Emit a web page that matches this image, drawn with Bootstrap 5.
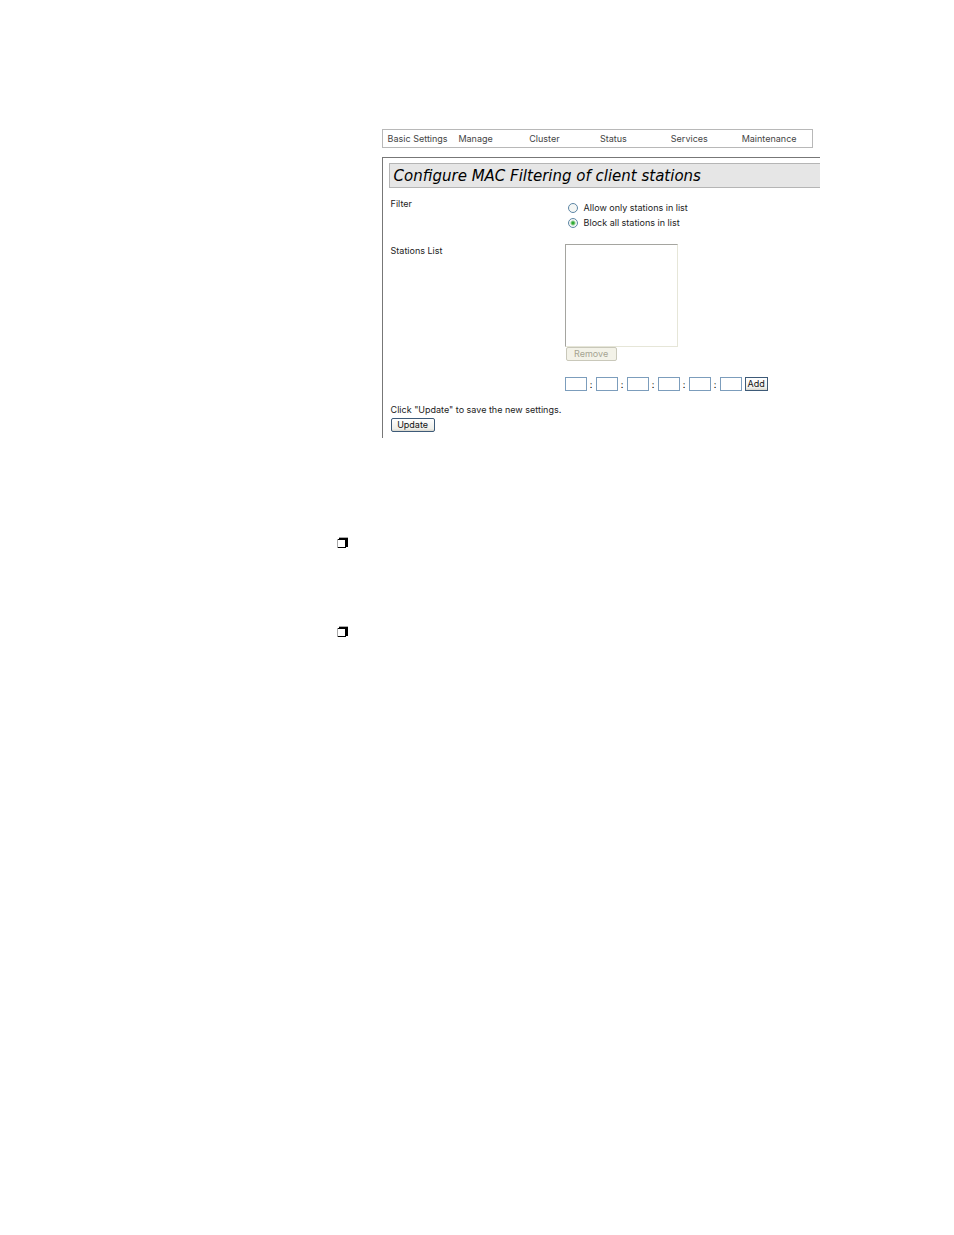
<!DOCTYPE html>
<html lang="en">
<head>
<meta charset="utf-8">
<meta name="viewport" content="width=device-width, initial-scale=1">
<title>Configure MAC Filtering of client stations</title>
<link rel="stylesheet" href="https://cdn.jsdelivr.net/npm/bootstrap@5.3.0/dist/css/bootstrap.min.css">
<style>
  body { background: #fff; color: #222; font-family: Inter, "DejaVu Sans", sans-serif; font-size: 9px; line-height: 15px; padding-top: 129px; }
  .doc-body { margin-left: 40%; width: 46%; }
  .menu-bar { border: 1px solid #b8b8b8; margin-right: 7px; padding: 1px 0 1px 5px; }
  .menu-bar .nav-link { flex: 1 1 0; color: #444; padding: 0; white-space: nowrap; }
  .panel { border: solid #777; border-width: 1px 0 0 1px; margin-top: 9px; padding: 5px 0 6px 6px; }
  .panel-title { background: #e6e6e6; border: 1px solid #b5b5b5; border-right: 0; color: #000; font: italic 15px/21px "DejaVu Sans", sans-serif; padding: 2px 4px 0; white-space: nowrap; }
  .fields { padding: 8px 0 0 2px; }
  .field-label { width: 174px; flex: none; }
  .filter-row { height: 47px; }
  .choices { padding-top: 4px; }
  .choice { padding: 0 3px; gap: 6px; }
  .choice input { appearance: none; width: 10px; height: 10px; margin: 0; border: 1px solid #5d86a5; border-radius: 50%; background: #f4f6f4; }
  .choice input:checked { background: radial-gradient(circle, #2faa32 0 1px, #f4f6f4 3px); }
  .station-list { display: block; width: 113px; height: 103px; margin-top: 1px; border: 1px solid #e6e6d8; border-top-color: #a5a5a0; border-left-color: #a5a5a0; background: #fff; padding: 0; border-radius: 0; overflow: hidden; }
  .xp-btn { display: block; height: 14px; padding: 0; border: 1px solid #3d5a78; border-radius: 2px; background: linear-gradient(#fff, #efefea 80%, #d9d7cd); color: #111; font-size: 9px; line-height: 12px; }
  .xp-btn:disabled { background: #f3f2e8; border-color: #c9c8ba; color: #a5a492; opacity: 1; }
  .btn-wide { width: 51px; margin-left: 1px; }
  .btn-mid { width: 44px; margin-top: 1px; }
  .btn-add { width: 23px; margin-left: 3px; border-radius: 0; }
  .mac-row { margin-top: 16px; }
  .octet { width: 22px; height: 14px; padding: 0 2px; border: 1px solid #7c9dbc; border-radius: 0; background: #fff; font-size: 9px; }
  .colon { width: 9px; text-align: center; color: #000; }
  .save-note { margin-top: 10px; }
  .notes { margin: 99px 0 0 35%; padding: 0 0 0 3px; list-style: none; }
  .notes li { height: 89px; }
  .notes svg { display: block; }
</style>
</head>
<body>
<main class="doc-body">
  <nav class="nav flex-nowrap menu-bar" aria-label="Main">
    <a class="nav-link" href="#">Basic Settings</a>
    <a class="nav-link" href="#">Manage</a>
    <a class="nav-link" href="#">Cluster</a>
    <a class="nav-link" href="#">Status</a>
    <a class="nav-link" href="#">Services</a>
    <a class="nav-link" href="#">Maintenance</a>
  </nav>
  <section class="panel">
    <h1 class="panel-title mb-0">Configure MAC Filtering of client stations</h1>
    <form class="fields">
      <div class="d-flex filter-row" role="radiogroup" aria-labelledby="filter-label">
        <div class="field-label" id="filter-label">Filter</div>
        <div class="choices">
          <div class="d-flex align-items-center choice">
            <input type="radio" name="filter" id="allow"><label for="allow">Allow only stations in list</label>
          </div>
          <div class="d-flex align-items-center choice">
            <input type="radio" name="filter" id="block" checked><label for="block">Block all stations in list</label>
          </div>
        </div>
      </div>
      <div class="d-flex">
        <label class="field-label" for="stations">Stations List</label>
        <div>
          <select class="station-list" id="stations" multiple></select>
          <button class="xp-btn btn-wide" type="button" disabled>Remove</button>
          <div class="d-flex mac-row" role="group" aria-label="MAC address">
            <input class="octet" type="text" maxlength="2" aria-label="Octet 1"><span class="colon">:</span>
            <input class="octet" type="text" maxlength="2" aria-label="Octet 2"><span class="colon">:</span>
            <input class="octet" type="text" maxlength="2" aria-label="Octet 3"><span class="colon">:</span>
            <input class="octet" type="text" maxlength="2" aria-label="Octet 4"><span class="colon">:</span>
            <input class="octet" type="text" maxlength="2" aria-label="Octet 5"><span class="colon">:</span>
            <input class="octet" type="text" maxlength="2" aria-label="Octet 6">
            <button class="xp-btn btn-add" type="button">Add</button>
          </div>
        </div>
      </div>
      <div class="save-note">Click "Update" to save the new settings.</div>
      <button class="xp-btn btn-mid" type="submit">Update</button>
    </form>
  </section>
</main>
<ul class="notes">
  <li><svg width="12" height="12" viewBox="0 0 12 12" aria-hidden="true"><path fill="#000" fill-rule="evenodd" d="M2 1H11V10H9V11H0V2H2ZM1 3V10H8V3Z"/><path fill="#aaa" d="M0 2H1V11H0ZM2 0H11V1H2Z"/></svg></li>
  <li><svg width="12" height="12" viewBox="0 0 12 12" aria-hidden="true"><path fill="#000" fill-rule="evenodd" d="M2 1H11V10H9V11H0V2H2ZM1 3V10H8V3Z"/><path fill="#aaa" d="M0 2H1V11H0ZM2 0H11V1H2Z"/></svg></li>
</ul>
<script src="https://cdn.jsdelivr.net/npm/bootstrap@5.3.0/dist/js/bootstrap.bundle.min.js"></script>
</body>
</html>
